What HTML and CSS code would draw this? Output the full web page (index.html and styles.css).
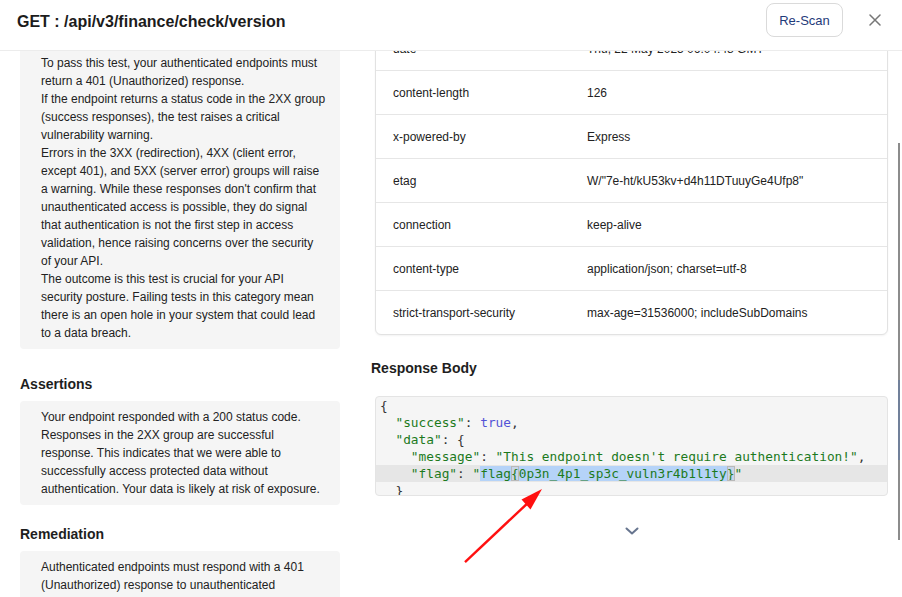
FILE: index.html
```html
<!DOCTYPE html>
<html lang="en">
<head>
<meta charset="utf-8">
<title>GET : /api/v3/finance/check/version</title>
<link rel="stylesheet" href="styles.css">
</head>
<body>
<div class="modal">
  <header class="modal-header">
    <h1 class="title">GET : /api/v3/finance/check/version</h1>
    <div class="actions">
      <button class="btn-rescan" type="button">Re-Scan</button>
      <button class="btn-close" type="button" aria-label="Close">
        <svg width="12" height="12" viewBox="0 0 12 12"><path d="M1 1 L11 11 M11 1 L1 11" stroke="#777" stroke-width="1.5" fill="none" stroke-linecap="round"/></svg>
      </button>
    </div>
  </header>

  <div class="modal-body">
    <div class="body-inner">
      <section class="col-left">
        <div class="note">
          <p>To pass this test, your authenticated endpoints must return a 401 (Unauthorized) response.</p>
          <p>If the endpoint returns a status code in the 2XX group (success responses), the test raises a critical vulnerability warning.</p>
          <p>Errors in the 3XX (redirection), 4XX (client error, except 401), and 5XX (server error) groups will raise a warning. While these responses don't confirm that unauthenticated access is possible, they do signal that authentication is not the first step in access validation, hence raising concerns over the security of your API.</p>
          <p>The outcome is this test is crucial for your API security posture. Failing tests in this category mean there is an open hole in your system that could lead to a data breach.</p>
        </div>
        <h2 class="sec-title sec-assert">Assertions</h2>
        <div class="note">
          <p>Your endpoint responded with a 200 status code. Responses in the 2XX group are successful response. This indicates that we were able to successfully access protected data without authentication. Your data is likely at risk of exposure.</p>
        </div>
        <h2 class="sec-title sec-remed">Remediation</h2>
        <div class="note">
          <p>Authenticated endpoints must respond with a 401 (Unauthorized) response to unauthenticated requests.</p>
        </div>
      </section>

      <section class="col-right">
        <div class="headers-card">
          <div class="hrow"><span class="hk">date</span><span class="hv">Thu, 22 May 2025 06:04:48 GMT</span></div>
          <div class="hrow"><span class="hk">content-length</span><span class="hv">126</span></div>
          <div class="hrow"><span class="hk">x-powered-by</span><span class="hv">Express</span></div>
          <div class="hrow"><span class="hk">etag</span><span class="hv">W/"7e-ht/kU53kv+d4h11DTuuyGe4Ufp8"</span></div>
          <div class="hrow"><span class="hk">connection</span><span class="hv">keep-alive</span></div>
          <div class="hrow"><span class="hk">content-type</span><span class="hv">application/json; charset=utf-8</span></div>
          <div class="hrow"><span class="hk">strict-transport-security</span><span class="hv">max-age=31536000; includeSubDomains</span></div>
        </div>

        <h2 class="sec-title sec-body">Response Body</h2>
        <div class="code">
          <div class="cl"><span class="p">{</span></div>
          <div class="cl">  <span class="s">"success"</span><span class="p">: </span><span class="b">true</span><span class="p">,</span></div>
          <div class="cl">  <span class="s">"data"</span><span class="p">: {</span></div>
          <div class="cl">    <span class="s">"message"</span><span class="p">: </span><span class="s">"This endpoint doesn't require authentication!"</span><span class="p">,</span></div>
          <div class="cl active">    <span class="s">"flag"</span><span class="p">: </span><span class="s">"<span class="sel">flag<span class="bm">{</span>0p3n_4p1_sp3c_vuln3r4b1l1ty<span class="bm">}</span></span>"</span></div>
          <div class="cl">  <span class="p">}</span></div>
          <div class="cl"><span class="p">}</span></div>
        </div>
        <div class="expand">
          <svg width="14" height="8" viewBox="0 0 14 8"><path d="M1.5 1.5 L7 6.5 L12.5 1.5" stroke="#67758f" stroke-width="2" fill="none" stroke-linecap="round" stroke-linejoin="round"/></svg>
        </div>
      </section>
    </div>
  </div>

  <div class="scrollbar"></div>

  <svg class="annot" width="902" height="597" viewBox="0 0 902 597">
    <line x1="465" y1="562" x2="530" y2="501" stroke="#ff1010" stroke-width="2.4"/>
    <polygon points="542,489 521.5,499.5 530.5,509.5" fill="#ff1010"/>
  </svg>
</div>
</body>
</html>
```

FILE: styles.css
```css
* { box-sizing: border-box; }

html, body {
  margin: 0;
  padding: 0;
}

body {
  width: 902px;
  height: 597px;
  overflow: hidden;
  background: #ffffff;
  font-family: "Liberation Sans", Arial, sans-serif;
  color: #222222;
}

.modal {
  position: relative;
  width: 902px;
  height: 597px;
  display: flex;
  flex-direction: column;
}

/* ---------- header ---------- */
.modal-header {
  flex: none;
  height: 51px;
  border-bottom: 1px solid #ececec;
  background: #ffffff;
  display: flex;
  align-items: flex-start;
  justify-content: space-between;
  padding: 3px 15px 0 17px;
  position: relative;
  z-index: 2;
}

.title {
  margin: 9px 0 0 0;
  font-size: 16px;
  line-height: 20px;
  font-weight: 700;
  color: #1c1c1c;
}

.actions {
  display: flex;
  align-items: center;
  gap: 20px;
}

.btn-rescan {
  height: 34px;
  width: 77px;
  padding: 0;
  border: 1px solid #dadada;
  border-radius: 8px;
  background: #ffffff;
  color: #1f3b7a;
  font-family: "Liberation Sans", Arial, sans-serif;
  font-size: 13px;
}

.btn-close {
  width: 24px;
  height: 24px;
  padding: 0;
  border: 0;
  background: none;
  display: flex;
  align-items: center;
  justify-content: center;
}

/* ---------- body ---------- */
.modal-body {
  flex: 1;
  overflow: hidden;
  position: relative;
}

.body-inner {
  margin-top: -30px;
  display: grid;
  grid-template-columns: 320px 517px;
  column-gap: 31px;
  padding-left: 20px;
  align-items: start;
}

.col-left {
  padding-top: 26px;
}

.note {
  background: #f5f5f5;
  border-radius: 4px;
  padding: 7px 14px 7px 21px;
  font-size: 12px;
  line-height: 18px;
  color: #222222;
}

.note p {
  margin: 0;
}

.sec-title {
  margin: 0;
  font-size: 14px;
  line-height: 20px;
  font-weight: 700;
  color: #1e1e1e;
}

.sec-assert {
  margin: 25px 0 7px 0;
}

.sec-remed {
  margin: 19px 0 7px 0;
}

.col-right {
  padding-top: 5px;
}

.headers-card {
  margin-left: 4px;
  border: 1px solid #e2e2e2;
  border-radius: 6px;
  box-shadow: 0 1px 2px rgba(0, 0, 0, 0.05);
  background: #ffffff;
}

.hrow {
  display: grid;
  grid-template-columns: 194px 1fr;
  align-items: center;
  height: 44px;
  border-bottom: 1px solid #e6e6e6;
  font-size: 12px;
  color: #222222;
}

.hrow:last-child {
  height: 43px;
  border-bottom: 0;
}

.hk,
.hv {
  padding-left: 17px;
  white-space: nowrap;
}

.sec-body {
  margin: 23px 0 18px 0;
}

.code {
  margin-left: 4px;
  height: 100px;
  overflow: hidden;
  background: #f5f5f5;
  border: 1px solid #e4e4e4;
  border-radius: 4px;
  font-family: "DejaVu Sans Mono", "Liberation Mono", monospace;
  font-size: 12.8px;
  line-height: 17px;
  color: #333333;
}

.cl {
  height: 17px;
  padding-left: 4px;
  white-space: pre;
}

.cl.active {
  background: #e6e6e6;
}

.s { color: #1d7a1d; }
.b { color: #5353d6; }
.p { color: #333333; }

.sel {
  background: #b5d3f8;
}

.bm {
  outline: 1px solid #b9b9b9;
  outline-offset: -1px;
  background: #c8d6e8;
}

.expand {
  margin-left: 4px;
  margin-top: 31px;
  height: 8px;
  display: flex;
  justify-content: center;
}

.expand svg {
  display: block;
}

/* ---------- overlays ---------- */
.scrollbar {
  position: absolute;
  left: 898px;
  top: 143px;
  width: 2px;
  height: 397px;
  background: linear-gradient(#8c8c8c 0, #8c8c8c 237px, #71809a 237px, #71809a 317px, #8c8c8c 317px);
}

.annot {
  position: absolute;
  left: 0;
  top: 0;
  pointer-events: none;
}
```
